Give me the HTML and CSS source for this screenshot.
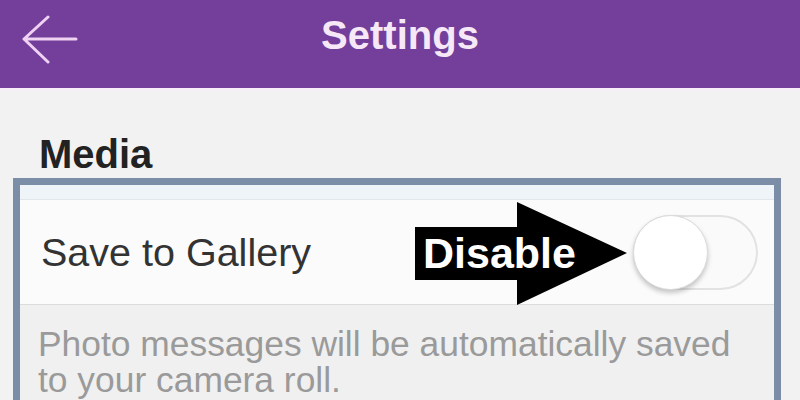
FILE: index.html
```html
<!DOCTYPE html>
<html lang="en">
<head>
<meta charset="utf-8">
<title>Settings</title>
<link rel="stylesheet" href="styles.css">
</head>
<body>
<div class="page">
  <header class="header">
    <div class="header-left">
      <svg class="back" width="60" height="50" viewBox="0 0 60 50" aria-hidden="true">
        <path d="M28 3 L4 25 L28 48 M4 25 L56 25" fill="none" stroke="#f0d2f2" stroke-width="3" stroke-linecap="round" stroke-linejoin="round"/>
      </svg>
    </div>
    <h1 class="title">Settings</h1>
    <div class="header-right"></div>
  </header>
  <main class="content">
    <h2 class="section-label">Media</h2>
    <section class="box">
      <div class="box-strip"></div>
      <div class="row">
        <span class="row-label">Save to Gallery</span>
        <div class="toggle"><div class="knob"></div></div>
      </div>
      <p class="desc">Photo messages will be automatically saved to your camera roll.</p>
    </section>
  </main>
  <div class="callout">
    <svg width="222" height="110" viewBox="0 0 222 110" aria-hidden="true">
      <polygon points="5,29 107,29 107,4 217,55 107,107 107,82 5,82" fill="#000"/>
    </svg>
    <span class="callout-text">Disable</span>
  </div>
</div>
</body>
</html>
```

FILE: styles.css
```css
* { box-sizing: border-box; }
html, body { margin: 0; padding: 0; }
body {
  width: 800px;
  height: 400px;
  overflow: hidden;
  background: #f2f2f2;
  font-family: "Liberation Sans", Arial, sans-serif;
}
.page {
  position: relative;
  width: 800px;
  height: 400px;
}
.header {
  height: 90px;
  background: #733f9a;
  border-bottom: 2px solid #f8eef9;
  display: grid;
  grid-template-columns: 1fr auto 1fr;
  align-items: start;
  padding-top: 14px;
}
.header-left { padding-left: 20px; }
.back { display: block; }
.title {
  margin: 0;
  margin-top: 1px;
  font-size: 40px;
  line-height: 40px;
  font-weight: bold;
  color: #f6e8f7;
}
.content {
  padding: 44px 0 0 0;
}
.section-label {
  margin: 0 0 4px 39px;
  font-size: 40px;
  line-height: 40px;
  font-weight: bold;
  color: #222;
}
.box {
  margin-left: 13px;
  width: 768px;
  height: 260px;
  border: 7px solid #7b8da7;
  border-bottom: none;
  background: #f0f0f0;
}
.box-strip {
  height: 15px;
  background: #eef4f8;
  border-bottom: 1px solid #e3e7ea;
}
.row {
  height: 105px;
  background: #fbfbfb;
  border-bottom: 1px solid #dcdcdc;
  display: flex;
  align-items: center;
  justify-content: space-between;
  padding: 0 16px 0 21px;
}
.row-label {
  font-size: 39.5px;
  color: #333;
}
.toggle {
  width: 125px;
  height: 75px;
  border-radius: 38px;
  background: #fafafa;
  box-shadow: inset 0 0 0 2px #e2e2e2;
  display: flex;
}
.knob {
  width: 75px;
  height: 75px;
  border-radius: 50%;
  background: #fff;
  border: 1px solid #dadada;
  box-shadow: 0 3px 5px rgba(0, 0, 0, 0.22);
}
.desc {
  margin: 0;
  padding: 21px 40px 0 18px;
  font-size: 35.4px;
  line-height: 36px;
  color: #9a9a9a;
}
.callout {
  position: absolute;
  left: 410px;
  top: 198px;
  width: 222px;
  height: 110px;
}
.callout svg { display: block; }
.callout-text {
  position: absolute;
  left: 13px;
  top: 34px;
  font-size: 43px;
  line-height: 43px;
  font-weight: bold;
  color: #fff;
}
```
